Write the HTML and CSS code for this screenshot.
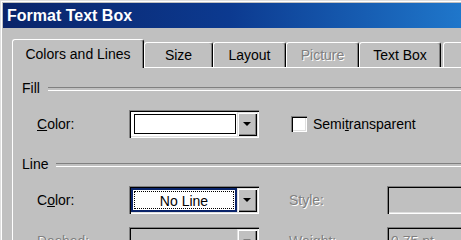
FILE: index.html
```html
<!DOCTYPE html>
<html lang="en">
<head>
    <meta charset="UTF-8">
    <title>Format Text Box</title>
    <link rel="stylesheet" href="styles.css">
</head>
<body>
    <div class="dialog">
        <div class="titlebar">Format Text Box</div>

        <!-- Tabs -->
        <div class="tabs">
            <div class="tab active tab-colors">Colors and Lines</div>
            <div class="tab tab-size">Size</div>
            <div class="tab tab-layout">Layout</div>
            <div class="tab tab-picture disabled">Picture</div>
            <div class="tab tab-textbox">Text Box</div>
            <div class="tab tab-more"></div>
        </div>

        <div class="panel">
            <!-- Fill -->
            <div class="group-title">Fill</div>
            <div class="row">
                <span class="label"><u>C</u>olor:</span>
                <div class="combo">
                    <div class="combo-field"><span class="swatch"></span></div>
                    <span class="combo-btn"></span>
                </div>
                <span class="checkbox"></span>
                <span class="check-label">Semi<u>t</u>ransparent</span>
            </div>

            <!-- Line -->
            <div class="group-title">Line</div>
            <div class="row">
                <span class="label">C<u>o</u>lor:</span>
                <div class="combo">
                    <div class="combo-field focus"><span class="combo-text">No Line</span></div>
                    <span class="combo-btn"></span>
                </div>
                <span class="label side disabled">Style:</span>
                <div class="field disabled"></div>
            </div>
            <div class="row">
                <span class="label disabled">Dashed:</span>
                <div class="combo disabled">
                    <div class="combo-field"></div>
                    <span class="combo-btn"></span>
                </div>
                <span class="label side disabled">Weight:</span>
                <div class="field disabled">0.75 pt</div>
            </div>
        </div>
    </div>
</body>
</html>
```

FILE: styles.css
```css
* {
    box-sizing: border-box;
}

html, body {
    margin: 0;
    overflow: hidden;
}

body {
    background-color: #c0c0c0;
    font-family: "Liberation Sans", Arial, sans-serif;
    font-size: 14px;
    color: #000;
}

.dialog {
    width: 600px;
    height: 300px;
    padding: 3px 0 0 3px;
    background-color: #c0c0c0;
    box-shadow: inset 1px 1px 0 #dfdfdf, inset 2px 2px 0 #fff;
}

.titlebar {
    height: 25px;
    padding-left: 4px;
    line-height: 25px;
    font-size: 16px;
    font-weight: bold;
    color: #fff;
    background: linear-gradient(to right, #0a246a 0%, #0c3a90 38%, #1f77cb 77%, #3a8ad6 100%);
}

/* Tabs */
.tabs {
    position: relative;
    z-index: 1;
    display: flex;
    align-items: flex-end;
    height: 39px;
    padding-left: 9px;
}

.tab {
    height: 25px;
    padding-top: 1px;
    line-height: 23px;
    text-align: center;
    white-space: nowrap;
    background-color: #c0c0c0;
    border-top: 1px solid #fff;
    border-left: 1px solid #fff;
    border-right: 1px solid #000;
    border-radius: 3px 3px 0 0;
    box-shadow: inset -1px 0 0 #808080;
}

.tab.active {
    height: 29px;
    margin-bottom: -1px;
    padding-top: 3px;
}

.tab.disabled {
    color: #808080;
    text-shadow: 1px 1px 0 #fff;
}

.tab-colors { width: 132px; }
.tab-size { width: 69px; }
.tab-layout { width: 73px; }
.tab-picture { width: 73px; }
.tab-textbox { width: 82px; }
.tab-more { width: 70px; margin-left: 2px; }

/* Panel */
.panel {
    margin-left: 9px;
    padding: 12px 0 0 9px;
    border-top: 1px solid #fff;
    border-left: 1px solid #fff;
}

.group-title {
    display: flex;
    align-items: center;
    height: 17px;
    line-height: 17px;
    margin-top: 18px;
}

.group-title:first-child {
    margin-top: 0;
}

.group-title::after {
    content: "";
    flex: 1;
    height: 2px;
    margin-left: 8px;
    border-top: 1px solid #808080;
    border-bottom: 1px solid #fff;
}

.row {
    display: flex;
    align-items: center;
    height: 28px;
    margin-top: 13px;
    padding-left: 15px;
}

.label {
    width: 92px;
    white-space: nowrap;
}

.label.side {
    width: 98px;
    margin-left: 30px;
}

.disabled {
    color: #808080;
    text-shadow: 1px 1px 0 #fff;
}

/* Combo box */
.combo {
    display: flex;
    width: 130px;
    height: 28px;
    padding: 2px;
    background-color: #fff;
    box-shadow: inset 1px 1px 0 #808080, inset 2px 2px 0 #000, inset -1px -1px 0 #fff, inset -2px -2px 0 #dfdfdf;
}

.combo-field {
    display: flex;
    flex: 1;
    padding: 2px 1px 2px 3px;
    background-color: #fff;
}

.combo.disabled .combo-field {
    background-color: #c0c0c0;
}

.swatch {
    flex: 1;
    background-color: #fff;
    border: 1px solid #000;
}

.combo-field.focus {
    padding: 1px;
    border: 2px solid #0a246a;
}

.combo-text {
    flex: 1;
    line-height: 18px;
    text-align: center;
    border: 1px dotted #000;
}

.combo-btn {
    display: flex;
    align-items: center;
    justify-content: center;
    width: 20px;
    background-color: #c0c0c0;
    box-shadow: inset 1px 1px 0 #dfdfdf, inset 2px 2px 0 #fff, inset -1px -1px 0 #000, inset -2px -2px 0 #808080;
}

.combo-btn::after {
    content: "";
    border-left: 4px solid transparent;
    border-right: 4px solid transparent;
    border-top: 4px solid #000;
}

.combo.disabled .combo-btn::after {
    border-top-color: #808080;
}

/* Checkbox */
.checkbox {
    width: 16px;
    height: 16px;
    margin-left: 32px;
    background-color: #fff;
    box-shadow: inset 1px 1px 0 #808080, inset 2px 2px 0 #000, inset -1px -1px 0 #fff, inset -2px -2px 0 #dfdfdf;
}

.check-label {
    margin-left: 6px;
}

/* Plain field */
.field {
    width: 110px;
    height: 28px;
    padding: 0 4px;
    line-height: 28px;
    background-color: #c0c0c0;
    box-shadow: inset 1px 1px 0 #808080, inset 2px 2px 0 #000, inset -1px -1px 0 #fff, inset -2px -2px 0 #dfdfdf;
}
```
